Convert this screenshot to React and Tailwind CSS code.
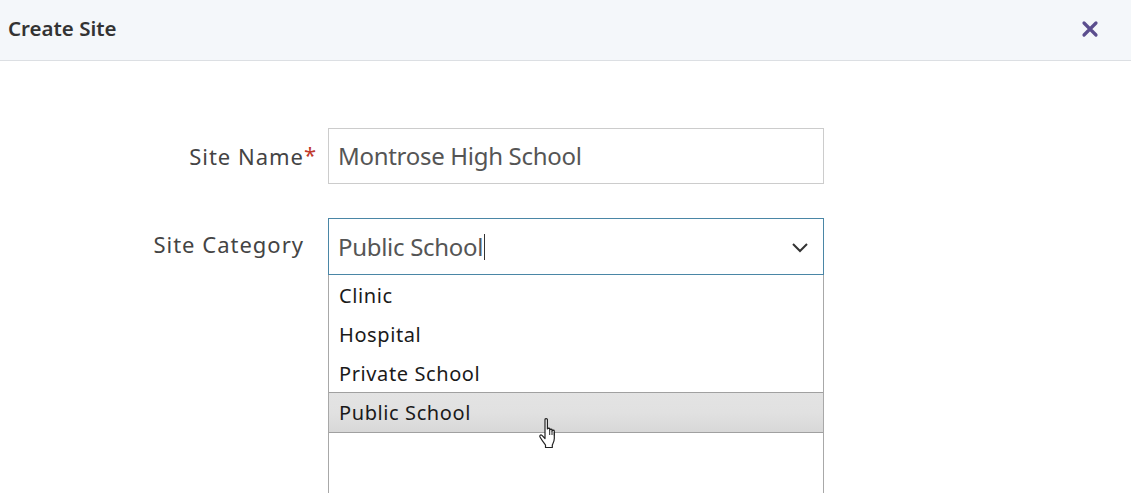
import React from 'react';

const categories = ['Clinic', 'Hospital', 'Private School', 'Public School'];

function HandCursor() {
  return (
    <svg width="22" height="34" viewBox="0 0 22 34" className="absolute left-[538px] top-[417px]">
      <path
        d="M7 2.5c0-1.2 2.4-1.2 2.4 0V12c0-1.1 2.3-1.1 2.3 0v1c0-1.1 2.3-1.1 2.3 0v1c0-1.1 2.3-1.1 2.3 0v7.5c0 3-1.3 5-2 6.5v2.5H7.5v-2.5C6 26 4 23.5 2 20c-.9-1.6.8-2.8 2-1.6L7 21.5Z"
        fill="#fff"
        stroke="#222"
        strokeWidth="1.2"
        strokeLinejoin="round"
      />
      <path d="M11.7 13v5M14 14v4M16.3 15v3.5" stroke="#222" strokeWidth="1" />
    </svg>
  );
}

export default function App() {
  return (
    <div className="relative w-[1131px] h-[493px] overflow-hidden bg-white" style={{ fontFamily: '"Noto Sans", "Open Sans", sans-serif' }}>
      <div className="h-[61px] bg-[#f4f7fa] border-b border-[#dcdfe3] flex items-center justify-between pl-2 pr-[32px]">
        <h2 className="text-[20.5px] font-semibold text-[#333] -mt-[4px]">Create Site</h2>
        <svg width="18" height="18" viewBox="0 0 18 18" className="-mt-[3px]">
          <path d="M3 3L15 15M15 3L3 15" stroke="#5b4e8e" strokeWidth="3.2" strokeLinecap="round" />
        </svg>
      </div>

      <div className="pt-[67px] flex flex-col gap-[34px]">
        <div className="flex items-center gap-[24px]">
          <label className="w-[304px] text-right text-[22px] tracking-[1px] text-[#444]">
            <span className="relative">
              Site Name
              <span className="absolute -right-[13px] -top-[3px] text-[#c0392b]">*</span>
            </span>
          </label>
          <div className="w-[496px] h-[56px] border border-[#ccc] flex items-center pl-[9px] text-[24px] tracking-[-0.3px] text-[#555]">
            Montrose High School
          </div>
        </div>

        <div className="flex items-start gap-[24px]">
          <label className="w-[304px] text-right text-[22px] tracking-[1px] text-[#444] pt-[10px]">Site Category</label>
          <div className="w-[496px] flex flex-col">
            <div className="h-[57px] border border-[#4a86a6] flex items-center justify-between pl-[9px] pr-[14px] text-[24px] tracking-[-0.3px] text-[#555]">
              <span className="flex items-center">
                Public School
                <span className="inline-block w-px h-[26px] bg-[#333] ml-px" />
              </span>
              <svg width="18" height="12" viewBox="0 0 18 12">
                <path d="M2 3l7 7 7-7" fill="none" stroke="#333" strokeWidth="2" />
              </svg>
            </div>
            <div className="h-[230px] border-x border-[#a8a8a8] flex flex-col">
              {categories.map((c) => {
                const active = c === 'Public School';
                return (
                  <div
                    key={c}
                    className={
                      active
                        ? 'h-[41px] flex items-center pl-[10px] pt-[1px] text-[20px] tracking-[0.6px] text-[#1a1a1a] border-y border-[#a0a0a0] bg-gradient-to-b from-[#e3e3e3] via-[#e1e1e1] to-[#d8d8d8]'
                        : 'h-[39px] flex items-center pl-[10px] pt-[3px] text-[20px] tracking-[0.6px] text-[#1a1a1a]'
                    }
                  >
                    {c}
                  </div>
                );
              })}
            </div>
          </div>
        </div>
      </div>

      <HandCursor />
    </div>
  );
}
